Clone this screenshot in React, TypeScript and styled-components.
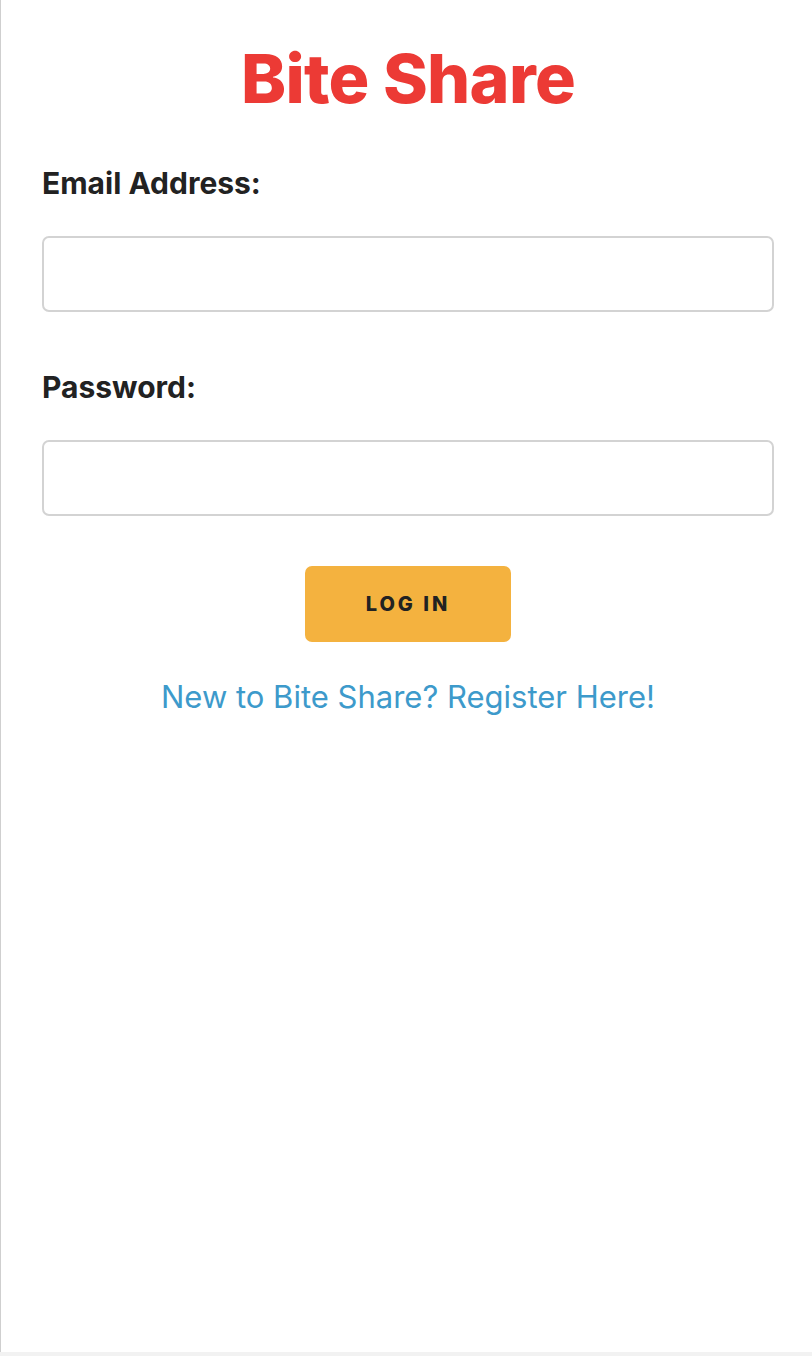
import styled, { createGlobalStyle } from "styled-components";

const GlobalStyle = createGlobalStyle`
  html, body {
    margin: 0;
    padding: 0;
    background: #f2f2f2;
  }
  * {
    box-sizing: border-box;
  }
`;

const Page = styled.div`
  height: 1352px;
  background: #ffffff;
  border-left: 1px solid #cfcfcf;
  padding: 0 38px 0 41px;
  font-family: Inter, "Noto Sans", sans-serif;
`;

const Title = styled.h1`
  margin: 0;
  padding-top: 38px;
  text-align: center;
  color: #ec3a35;
  font-size: 68px;
  font-weight: 800;
  letter-spacing: -0.7px;
  line-height: 80px;
`;

const Form = styled.form`
  display: flex;
  flex-direction: column;
  padding-top: 45px;
`;

const Field = styled.div`
  display: flex;
  flex-direction: column;
  gap: 33px;
  margin-bottom: 55px;
`;

const Label = styled.label`
  color: #222222;
  font-size: 30px;
  font-weight: 700;
  line-height: 40px;
`;

const Input = styled.input`
  height: 76px;
  width: 100%;
  border: 2px solid #d3d3d3;
  border-radius: 7px;
  background: #fff;
  font: inherit;
  font-size: 26px;
  padding: 0 16px;
  outline: none;
`;

const Actions = styled.div`
  display: flex;
  flex-direction: column;
  align-items: center;
  margin-top: -5px;
  gap: 35px;
`;

const Button = styled.button`
  width: 206px;
  height: 76px;
  border: none;
  border-radius: 7px;
  background: #f4b23f;
  color: #222222;
  font-family: inherit;
  font-size: 20px;
  font-weight: 800;
  letter-spacing: 3px;
  cursor: pointer;
`;

const RegisterLink = styled.a`
  color: #3d9acb;
  font-size: 31px;
  line-height: 40px;
  text-decoration: none;
`;

export default function App() {
  return (
    <>
      <GlobalStyle />
      <Page>
        <Title>Bite Share</Title>
        <Form onSubmit={(e) => e.preventDefault()}>
          <Field>
            <Label htmlFor="email">Email Address:</Label>
            <Input id="email" type="email" />
          </Field>
          <Field>
            <Label htmlFor="password">Password:</Label>
            <Input id="password" type="password" />
          </Field>
          <Actions>
            <Button type="submit">LOG IN</Button>
            <RegisterLink href="#">New to Bite Share? Register Here!</RegisterLink>
          </Actions>
        </Form>
      </Page>
    </>
  );
}
